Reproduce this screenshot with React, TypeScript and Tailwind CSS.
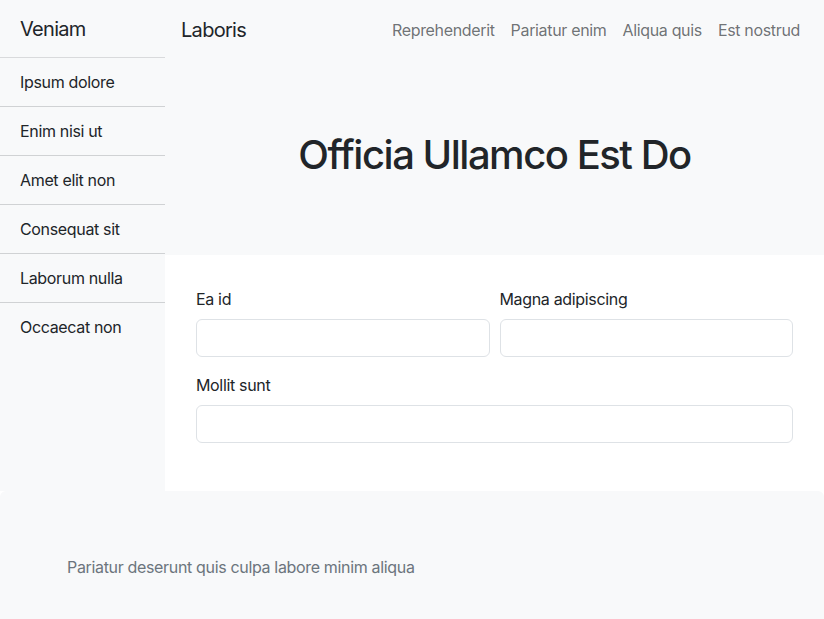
export default function App() {
  const items = ["Ipsum dolore", "Enim nisi ut", "Amet elit non", "Consequat sit", "Laborum nulla", "Occaecat non"];
  const links = ["Reprehenderit", "Pariatur enim", "Aliqua quis", "Est nostrud"];
  return (
    <div className="font-['Inter',sans-serif] text-[#212529] text-[16px] leading-[24px] tracking-[-0.021em] bg-white">
      <div className="flex">
        <aside className="w-[165px] shrink-0 bg-[#f8f9fa]">
          <div className="h-[58px] flex items-center px-[20px] text-[20px] tracking-[-0.035em] border-b border-[#d9dadc]">Veniam</div>
          {items.map((t, i) => (
            <div
              key={t}
              className={
                i < items.length - 1
                  ? "px-[20px] py-[12px] border-b border-[#d0d2d4]"
                  : "px-[20px] py-[12px]"
              }
            >
              {t}
            </div>
          ))}
        </aside>
        <main className="flex-1 flex flex-col">
          <div className="bg-[#f8f9fa]">
            <nav className="h-[60px] flex items-center justify-between pl-[16px] pr-[16px]">
              <span className="text-[20px] leading-[30px] tracking-[-0.035em]">Laboris</span>
              <div className="flex">
                {links.map((l) => (
                  <span key={l} className="px-[8px] text-[rgba(33,37,41,0.65)]">{l}</span>
                ))}
              </div>
            </nav>
            <div className="h-[195px] flex items-center justify-center pb-[6px]">
              <h1 className="text-[40px] leading-[48px] font-medium tracking-[-0.037em]">Officia Ullamco Est Do</h1>
            </div>
          </div>
          <div className="pt-[32px] pb-[32px] pl-[31px] pr-[31px]">
            <div className="flex gap-[10px] mb-[16px]">
              <div className="flex-1">
                <label className="block mb-[8px]">Ea id</label>
                <input className="block w-full h-[38px] border border-[#dee2e6] rounded-[6px] bg-white" />
              </div>
              <div className="flex-1">
                <label className="block mb-[8px]">Magna adipiscing</label>
                <input className="block w-full h-[38px] border border-[#dee2e6] rounded-[6px] bg-white" />
              </div>
            </div>
            <div className="mb-[16px]">
              <label className="block mb-[8px]">Mollit sunt</label>
              <input className="block w-full h-[38px] border border-[#dee2e6] rounded-[6px] bg-white" />
            </div>
          </div>
        </main>
      </div>
      <footer className="bg-[#f8f9fa] rounded-[6px] py-[64px] pl-[67px] text-[#6c757d]">
        Pariatur deserunt quis culpa labore minim aliqua
      </footer>
    </div>
  );
}
